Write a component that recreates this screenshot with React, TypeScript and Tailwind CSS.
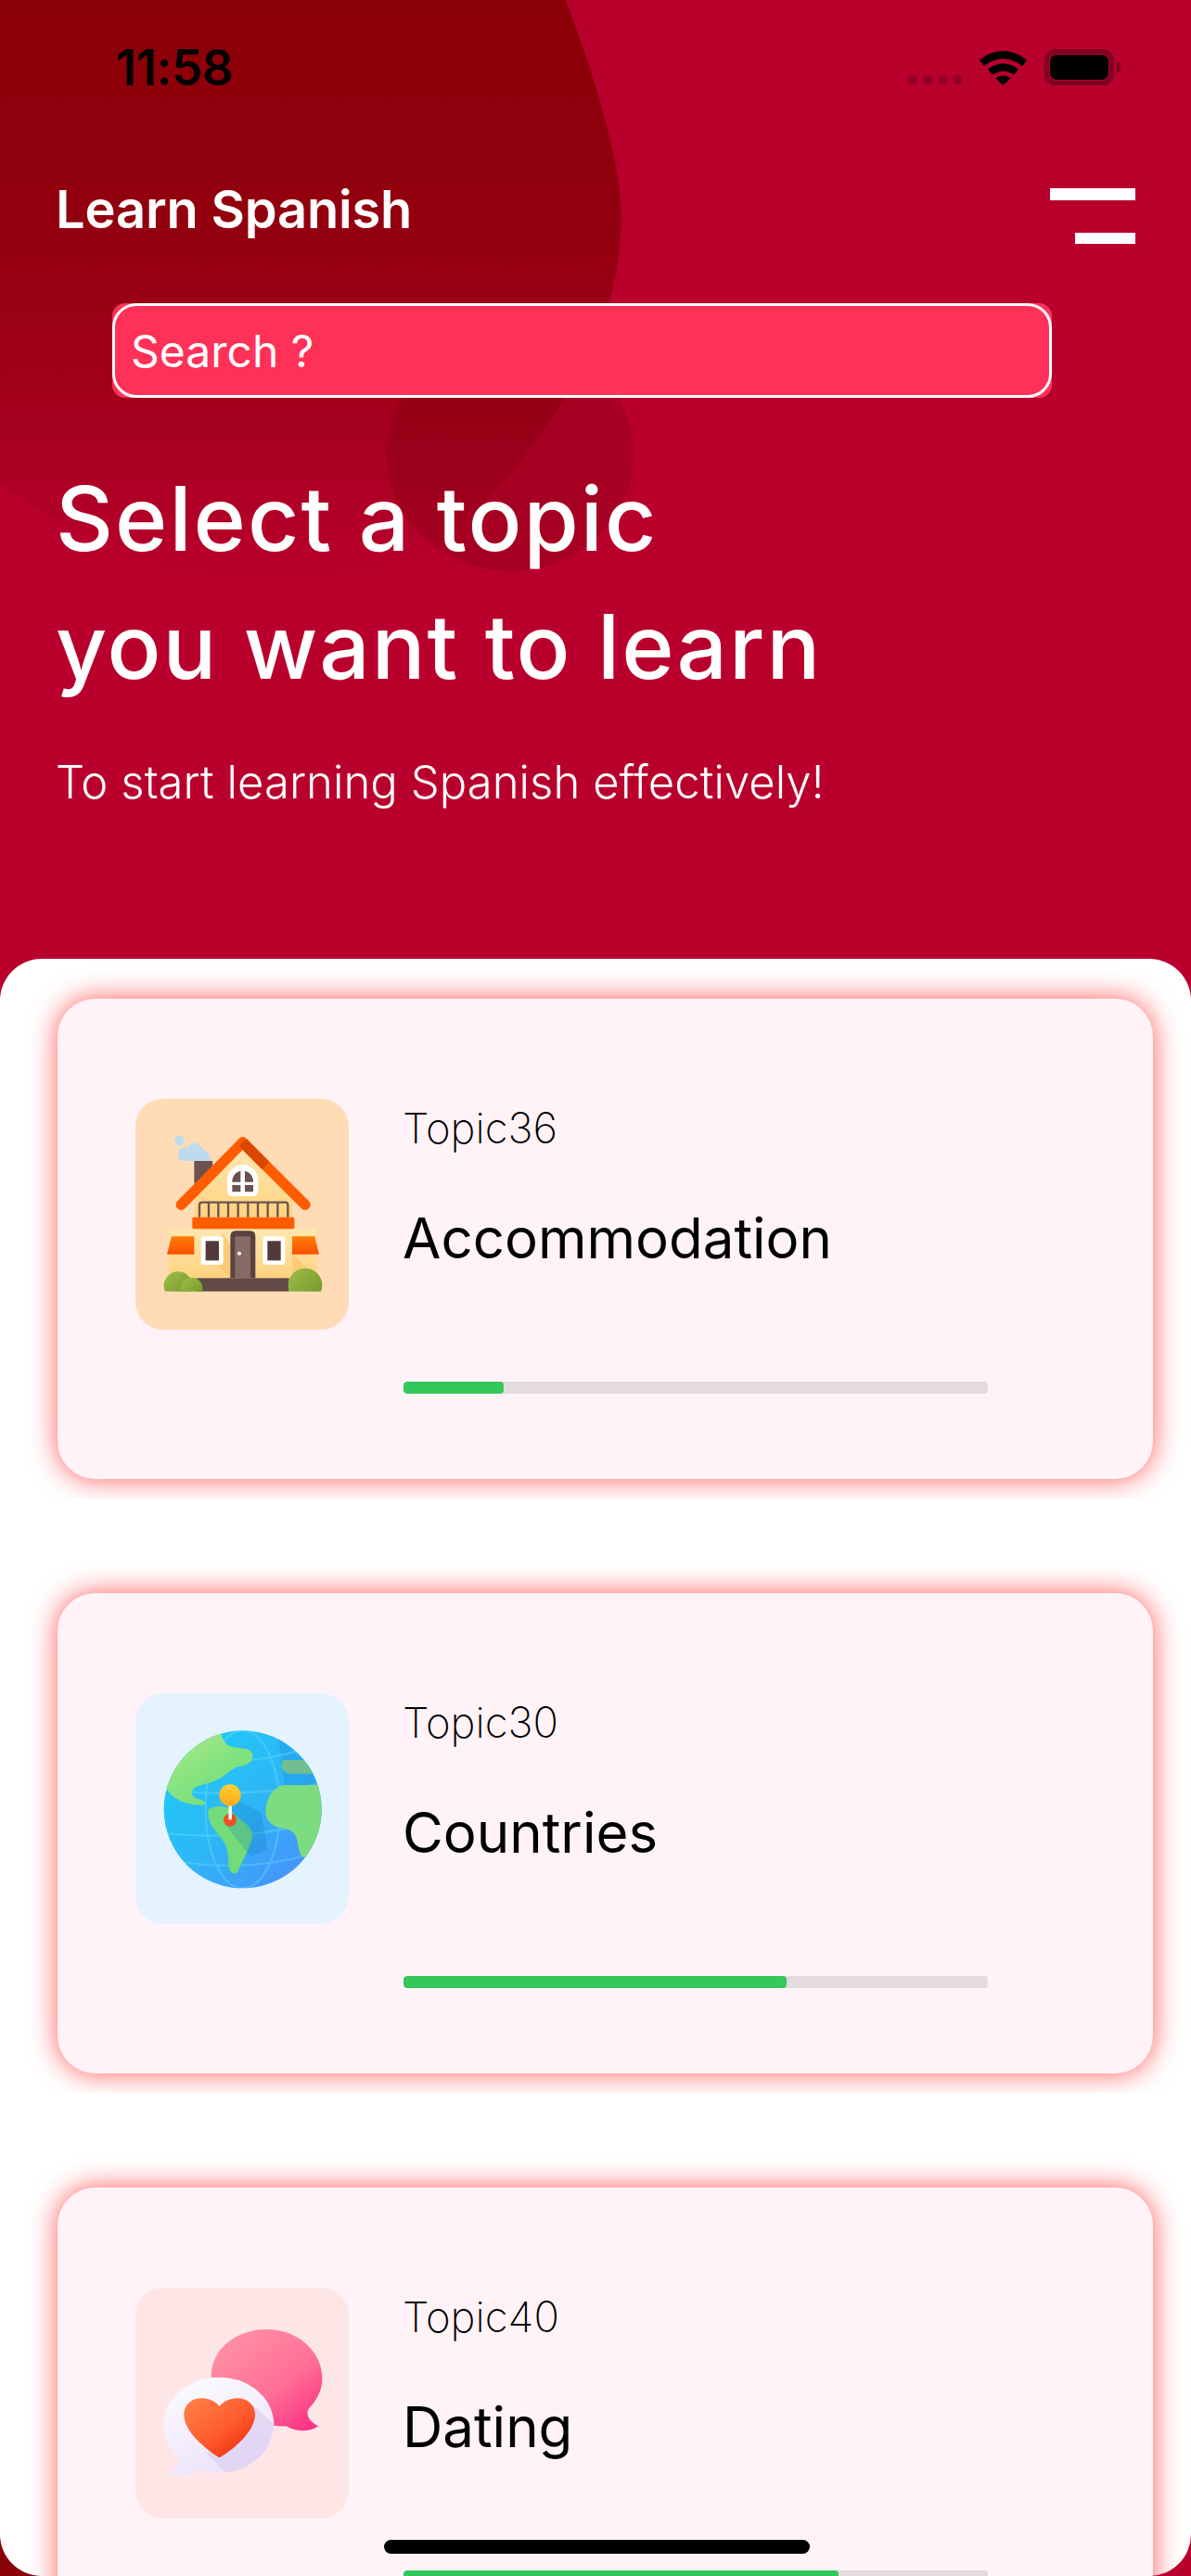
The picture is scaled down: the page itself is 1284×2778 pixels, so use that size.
import type { ReactNode } from "react";

function HouseIcon() {
  return (
    <svg viewBox="48 45 690 747" className="h-full w-full">
      <defs>
        <linearGradient id="wall" x1="0" y1="0" x2="0" y2="1">
          <stop offset="0" stopColor="#ffe7b0" />
          <stop offset="1" stopColor="#ffd27e" />
        </linearGradient>
        <linearGradient id="awning" x1="0" y1="0" x2="0" y2="1">
          <stop offset="0" stopColor="#ff7d0a" />
          <stop offset="1" stopColor="#fb4f00" />
        </linearGradient>
        <linearGradient id="bush" x1="0" y1="0" x2="1" y2="1">
          <stop offset="0" stopColor="#a0bf4c" />
          <stop offset="1" stopColor="#6f9222" />
        </linearGradient>
        <clipPath id="ground">
          <rect x="100" y="100" width="600" height="568" />
        </clipPath>
      </defs>
      <circle cx="190" cy="180" r="16" fill="#bedcee" />
      <path d="M185 228c0-20 18-30 34-26 8-18 36-20 46 6 16 4 26 20 26 38h-78c-16 0-28-4-28-18z" fill="#bddbed" />
      <rect x="238" y="246" width="60" height="74" rx="3" fill="#6d5350" />
      <path d="M395 205 240 360v70h315v-62z" fill="url(#wall)" />
      <path d="M155 466h480v160H155z" fill="url(#wall)" />
      <path d="M355 625 262 532l70-50 100 143zM555 546l80 79H555z" fill="#fcc56e" opacity="0.7" />
      <path d="M345 342v-34a50 50 0 0 1 100 0v34q0 18-18 18h-64q-18 0-18-18z" fill="#fff" />
      <path d="M361 314a35 35 0 0 1 27-36v36zM402 278a35 35 0 0 1 27 36h-27zM361 324h27v22h-27zM402 324h27v22h-27z" fill="#6b5250" />
      <path d="M255 428v-40q0-8 8-8h270q8 0 8 8v40M285 380v48M316 380v48M348 380v48M380 380v48M412 380v48M444 380v48M476 380v48M508 380v48" fill="none" stroke="#6d5350" strokeWidth="7" />
      <path d="M196 388 395 186" stroke="#ff5c00" strokeWidth="34" strokeLinecap="round" />
      <path d="M395 186 597 388" stroke="#ff5c00" strokeWidth="34" strokeLinecap="round" />
      <path d="M395 186 470 262" stroke="#d94700" strokeWidth="34" />
      <rect x="232" y="428" width="330" height="38" rx="4" fill="#ff5c00" />
      <path d="M165 490h73v58h-88z" fill="url(#awning)" />
      <path d="M555 490h73l14 58h-87z" fill="url(#awning)" />
      <rect x="260" y="490" width="72" height="92" rx="9" fill="#fff" />
      <rect x="275" y="505" width="43" height="63" fill="#523a3a" />
      <rect x="460" y="490" width="72" height="92" rx="9" fill="#fff" />
      <rect x="475" y="505" width="43" height="63" fill="#523a3a" />
      <path d="M355 625V490q0-18 18-18h45q18 0 18 18v135z" fill="#5a4240" />
      <rect x="370" y="490" width="50" height="135" rx="4" fill="#866a65" />
      <circle cx="384" cy="545" r="6" fill="#fff" />
      <rect x="245" y="625" width="300" height="43" fill="#614a48" />
      <g clipPath="url(#ground)">
        <circle cx="186" cy="650" r="46" fill="url(#bush)" />
        <circle cx="230" cy="658" r="35" fill="url(#bush)" />
        <circle cx="597" cy="648" r="55" fill="url(#bush)" />
      </g>
    </svg>
  );
}

function GlobeIcon() {
  return (
    <svg viewBox="48 48 690 747" className="h-full w-full">
      <defs>
        <linearGradient id="sea" x1="0.1" y1="0.1" x2="0.85" y2="0.9">
          <stop offset="0" stopColor="#1fcbf6" />
          <stop offset="0.55" stopColor="#2fb6f7" />
          <stop offset="1" stopColor="#4893fb" />
        </linearGradient>
        <linearGradient id="land" x1="0" y1="0" x2="1" y2="1">
          <stop offset="0" stopColor="#bde68c" />
          <stop offset="0.5" stopColor="#86e480" />
          <stop offset="1" stopColor="#6fd67c" />
        </linearGradient>
        <linearGradient id="pinhead" x1="0" y1="0" x2="0" y2="1">
          <stop offset="0" stopColor="#ffd02a" />
          <stop offset="1" stopColor="#fba81e" />
        </linearGradient>
        <clipPath id="earth">
          <circle cx="395" cy="424" r="255" />
        </clipPath>
      </defs>
      <circle cx="395" cy="424" r="255" fill="url(#sea)" />
      <g clipPath="url(#earth)">
        <path d="M510 190 700 360v120H590L530 340z" fill="#1e9ae6" opacity="0.45" />
        <g fill="none" stroke="#62dcf7" strokeWidth="7" opacity="0.4">
          <ellipse cx="395" cy="424" rx="120" ry="255" />
          <path d="M140 360q255 30 510-20M140 500q255 30 510-40M190 260q200 30 400-30M170 590q230 40 440-20" />
        </g>
        <path d="M100 180H325q5 20 20 35c15 10 50 10 65 14 30 12 20 50-20 55-30 2-50 35-90 50-25 8-45 10-62 22-15 12-5 28 10 34 20 4 32 10 20 20-40 2-90-12-110-40-20-30-30-60-40-80z" fill="url(#land)" />
        <path d="M284 424c20-14 60-16 80 10 15 20 60 40 62 70 2 30-35 90-45 118-6 14-26 12-30-10-4-30 0-50-15-80-15-25-60-60-52-108z" fill="#74db7a" />
        <path d="M530 264h140v44H548c-32 0-32-44-18-44z" fill="#6fc08e" />
        <path d="M530 345h150v180l-70 50c-25 10-30-5-35-30-4-30-10-50-35-57-25-4-60-10-70-45-6-25 10-92 60-98z" fill="#7cdc80" />
        <path d="M370 390l85 45 20 120-55 20-80-100z" fill="#0f6fb0" opacity="0.22" />
      </g>
      <circle cx="354" cy="458" r="21" fill="#ee4d22" />
      <rect x="349" y="405" width="11" height="52" fill="#f4f4f6" />
      <circle cx="354" cy="378" r="35" fill="url(#pinhead)" />
    </svg>
  );
}

function ChatIcon() {
  return (
    <svg viewBox="48 50 690 747" className="h-full w-full">
      <defs>
        <linearGradient id="pinkbubble" x1="0.2" y1="0.15" x2="0.9" y2="0.95">
          <stop offset="0" stopColor="#ff8ca3" />
          <stop offset="0.55" stopColor="#ff6f95" />
          <stop offset="1" stopColor="#fb3384" />
        </linearGradient>
        <linearGradient id="whitebubble" x1="0.2" y1="0" x2="0.7" y2="1">
          <stop offset="0" stopColor="#fbfbff" />
          <stop offset="1" stopColor="#ebe0fa" />
        </linearGradient>
        <linearGradient id="heart" x1="0.1" y1="0.15" x2="0.85" y2="0.95">
          <stop offset="0" stopColor="#ff7a45" />
          <stop offset="0.55" stopColor="#ff5a2c" />
          <stop offset="1" stopColor="#ee2c0c" />
        </linearGradient>
      </defs>
      <path d="M472 185c100 0 180 70 180 160 0 38-18 70-42 95-14 18 0 44 30 58-30 20-70 20-105 0-20 2-50-2-80-12-90-40-165-130-162-150 0-85 80-151 179-151z" fill="url(#pinkbubble)" />
      <path d="M318 340c98 0 178 68 178 154s-80 154-178 154c-20 0-40-3-58-9-28 18-70 28-108 14 26-12 40-34 36-54-30-28-48-66-48-105 0-86 80-154 178-154z" fill="url(#whitebubble)" />
      <path d="M430 432l65 58c0 80-68 150-156 158l-60-62z" fill="#d8cdef" opacity="0.6" />
      <path d="M320 600c-30-18-115-78-115-140 0-30 24-52 58-52 25 0 45 12 57 26 12-14 32-26 57-26 34 0 58 22 58 52 0 62-85 122-115 140z" fill="url(#heart)" />
    </svg>
  );
}

type Topic = {
  code: string;
  name: string;
  tile: string;
  done: number;
  icon: ReactNode;
};

const topics: Topic[] = [
  { code: "Topic36", name: "Accommodation", tile: "bg-[#ffdcb5]", done: 108, icon: <HouseIcon /> },
  { code: "Topic30", name: "Countries", tile: "bg-[#e5f3ff]", done: 413, icon: <GlobeIcon /> },
  { code: "Topic40", name: "Dating", tile: "bg-[#ffe6e6]", done: 469, icon: <ChatIcon /> },
];

function TopicCard({ topic }: { topic: Topic }) {
  return (
    <div className="shrink-0 overflow-hidden pt-[43px] pr-[41px] pb-[21px] pl-[62px]">
      <div className="flex h-[518px] gap-[59px] rounded-[41px] bg-[#fff3f7] pt-[108px] pl-[84px] shadow-[0_0_30px_rgba(255,0,0,0.65)]">
        <div className={`h-[249px] w-[230px] shrink-0 overflow-hidden rounded-[30px] ${topic.tile}`}>{topic.icon}</div>
        <div className="flex w-[630px] flex-col pt-[7px]">
          <p className="-ml-px text-[45.5px] leading-[50px] font-extralight text-black">{topic.code}</p>
          <p className="mt-[58px] -ml-px text-[60px] leading-[70px] font-normal text-black">{topic.name}</p>
          <div className="mt-[120px] h-[13px] w-[630px] shrink-0 overflow-hidden rounded-[4px] bg-[#e3dbdf]">
            <div className="h-full rounded-[4px] bg-[#34c759]" style={{ width: topic.done }} />
          </div>
        </div>
      </div>
    </div>
  );
}

export default function App() {
  return (
    <main className="flex h-[2778px] w-[1284px] flex-col overflow-hidden bg-[linear-gradient(to_bottom,#b9002d_2700px,transparent_2700px),linear-gradient(90deg,#8a0008_50%,#b9002d_50%)] font-['Inter',sans-serif] text-white">
      <header className="relative h-[1034px] shrink-0 overflow-hidden bg-[#b9002d]">
        {/* Background blobs */}
        <svg className="absolute top-0 left-0" width="1284" height="700" viewBox="0 0 1284 700">
          <defs>
            <linearGradient id="blobMain" x1="0" y1="0" x2="0" y2="1">
              <stop offset="0" stopColor="#8a0007" />
              <stop offset="0.4" stopColor="#93000f" />
              <stop offset="0.7" stopColor="#a3001c" />
              <stop offset="1" stopColor="#b9002d" />
            </linearGradient>
          </defs>
          <path d="M0 0H610C648 100 672 190 670 240C668 300 650 370 610 428C570 490 530 540 470 590C340 640 160 640 0 522Z" fill="url(#blobMain)" />
          <ellipse cx="550" cy="490" rx="133" ry="126" fill="#640000" fillOpacity="0.22" />
        </svg>

        <div className="relative flex flex-col">
          {/* Status bar */}
          <div className="flex h-[92px] items-start pt-[47px] pl-[125px] text-black">
            <span className="text-[53px] leading-[52px] font-semibold tracking-[-0.5px]">11:58</span>
            <div className="mt-[6px] ml-auto flex items-end pr-[76px]">
              <div className="mb-[1px] flex gap-[6px]">
                <i className="h-[10px] w-[10px] rounded-[3px] bg-black/20" />
                <i className="h-[10px] w-[10px] rounded-[3px] bg-black/20" />
                <i className="h-[10px] w-[10px] rounded-[3px] bg-black/20" />
                <i className="h-[10px] w-[10px] rounded-[3px] bg-black/20" />
              </div>
              <svg className="ml-[19px]" width="51" height="37" viewBox="0 0 51 37" fill="#000">
                <path d="M25.5 0C16 0 7.300 3.700 0 10l5 6.500C10.500 11.500 17.500 8.500 25.500 8.500s15 3 20.500 8L51 10C43.700 3.700 35 0 25.500 0z" />
                <path d="M25.500 13.500c-6.200 0-12 2.300-16.400 6.300l5 6.200c3-2.700 7-4.300 11.400-4.300s8.400 1.600 11.400 4.300l5-6.200c-4.400-4-10.200-6.300-16.400-6.300z" />
                <path d="M25.500 26.500c-3.200 0-6 1.100-8.200 3L25.500 37l8.200-7.500c-2.200-1.900-5-3-8.200-3z" />
              </svg>
              <div className="ml-[19px] flex items-center">
                <div className="h-[39px] w-[75px] rounded-[12px] border-[5px] border-[#7f0020] p-[1px]">
                  <div className="h-full w-full rounded-[7px] bg-black" />
                </div>
                <div className="ml-[3px] h-[11px] w-[4px] rounded-r-[4px] bg-[#7f0020]" />
              </div>
            </div>
          </div>

          {/* Nav */}
          <div className="mt-[111px] flex h-[60px] items-start justify-between pr-[60px] pl-[60px]">
            <h2 className="text-[56px] leading-[46px] font-semibold tracking-[-0.2px]">Learn Spanish</h2>
            <div className="flex flex-col items-end gap-[35px]">
              <div className="h-[13px] w-[92px] bg-white" />
              <div className="h-[12px] w-[65px] bg-white" />
            </div>
          </div>

          {/* Search */}
          <div className="mt-[64px] ml-[121px] h-[102px] w-[1013px] rounded-[14px] bg-[#ff3158]">
            <div className="flex h-full items-center rounded-[26px] border-[3px] border-white pt-[2px] pl-[17px] text-[48px]">Search ?</div>
          </div>

          <h1 className="mt-[61px] pl-[60px] text-[96px] leading-[138px] font-medium tracking-[2px]">
            Select a topic
            <br />
            you want to learn
          </h1>
          <p className="mt-[48px] pl-[60px] text-[49px] leading-[60px] font-[350] tracking-[0.05px]">To start learning Spanish effectively!</p>
        </div>
      </header>

      {/* Topic list */}
      <section className="relative flex min-h-0 flex-1 flex-col gap-[59px] overflow-hidden rounded-[45px] bg-white">
        {topics.map((t) => (
          <TopicCard key={t.code} topic={t} />
        ))}
        <div className="absolute top-[1705px] left-[414px] h-[15px] w-[459px] rounded-full bg-black" />
      </section>
    </main>
  );
}
